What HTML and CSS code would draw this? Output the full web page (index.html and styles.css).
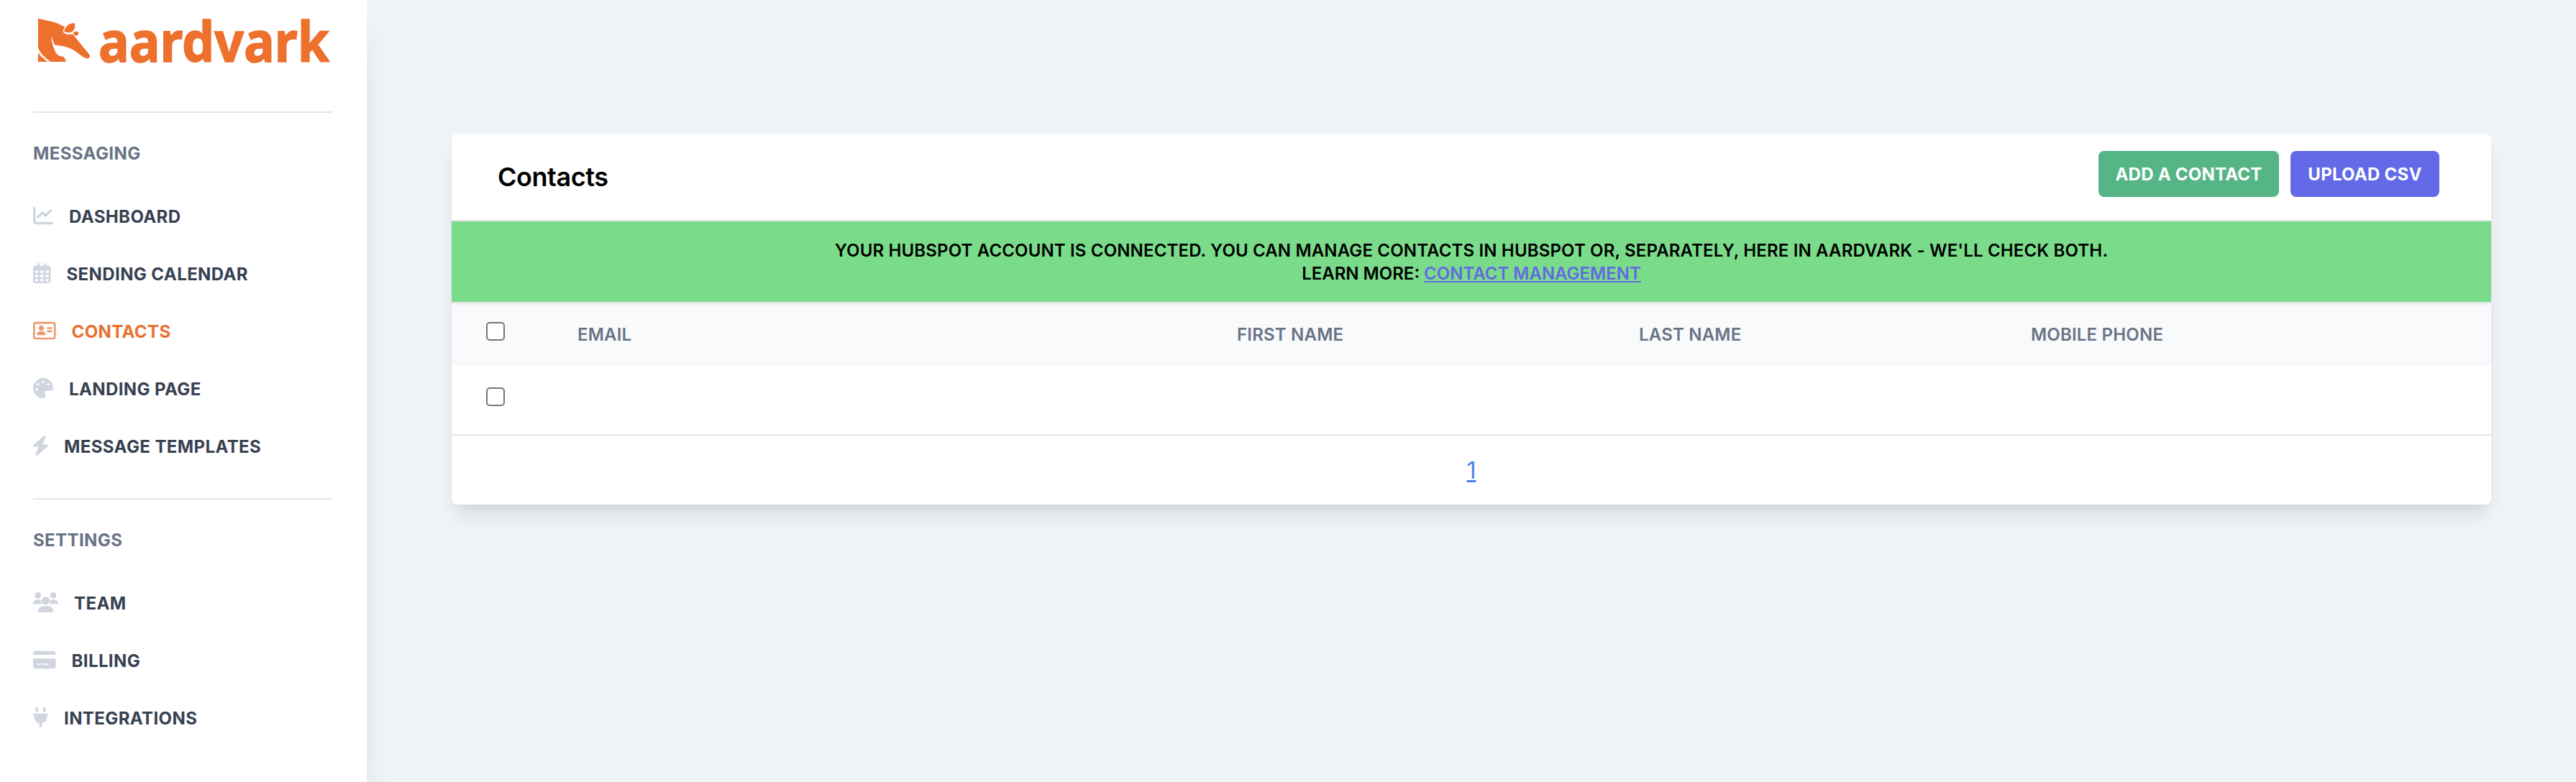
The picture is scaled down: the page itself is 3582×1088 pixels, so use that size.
FILE: index.html
```html
<!DOCTYPE html>
<html lang="en">
<head>
    <meta charset="UTF-8">
    <meta name="viewport" content="width=device-width, initial-scale=1.0">
    <title>Aardvark - Contacts</title>
    <link rel="stylesheet" href="styles.css">
</head>
<body>
    <!-- Sidebar -->
    <nav class="sidebar">
        <a class="logo" href="#">
            <svg width="416" height="155" viewBox="46 0 416 155" fill="#ed702d">
                <path d="M53 25.7L73 30.2C80 32 86 35 90.2 37.6C88.5 40 87.6 42.5 88 45C90 46.8 93 47.5 97 47.6L101.5 48L124 75.5C126.3 79 123.5 82 120.5 81.3C114 80 108 72 98 67.5C90 63.8 82 63.6 76.8 62.8C74 60 73.5 56 72.3 52.3L71.3 52.6C72 59 74 66 76.5 71C79 77 83 78 88.3 79C90 81 91.3 83.5 92 86H70.2C63 80.5 56 74.5 53 66.5Z"/>
                <path d="M53 73.2C56.5 78.5 61.5 82.5 66.3 86H53Z"/>
                <g stroke="#fff" stroke-width="1">
                    <path d="M88.4 44C90 36 97 31.500 103 31.700C106.500 35 104.500 41 100.500 44.500C97 46.500 92 46 88.400 44Z"/>
                    <path d="M101.500 46.500C102.500 43 107.500 42 109.700 45.500C109.500 50 105 51.500 102 48.300Z"/>
                </g>
                <path d="M88.500 44.500L94 47.500L102 46" fill="none" stroke="#fff" stroke-width="1.200"/>
                <text class="logo-text" x="137" y="86" textLength="321" lengthAdjust="spacingAndGlyphs">aardvark</text>
            </svg>
        </a>
        <hr>
        <h6>Messaging</h6>
        <ul>
            <li><a href="#">
                <svg width="28" height="28" viewBox="0 0 512 512"><path d="M64 64c0-17.700-14.300-32-32-32S0 46.300 0 64V400c0 44.200 35.800 80 80 80H480c17.700 0 32-14.300 32-32s-14.300-32-32-32H80c-8.800 0-16-7.200-16-16V64zm406.600 86.600c12.500-12.500 12.500-32.800 0-45.300s-32.800-12.500-45.300 0L320 210.700l-57.400-57.400c-12.500-12.500-32.800-12.500-45.300 0l-112 112c-12.500 12.500-12.500 32.800 0 45.300s32.800 12.500 45.300 0L240 221.300l57.400 57.400c12.500 12.500 32.800 12.500 45.300 0l128-128z"/></svg>
                <span>Dashboard</span></a></li>
            <li><a href="#">
                <svg width="24.5" height="28" viewBox="0 0 448 512"><path fill-rule="evenodd" d="M112 24a24 24 0 0 1 48 0V64H288V24a24 24 0 0 1 48 0V64H384a64 64 0 0 1 64 64V448a64 64 0 0 1-64 64H64a64 64 0 0 1-64-64V128A64 64 0 0 1 64 64H112ZM48 192V248H128V192ZM176 192V248H272V192ZM320 192V248H400V192ZM48 296V360H128V296ZM176 296V360H272V296ZM320 296V360H400V296ZM48 408V448a16 16 0 0 0 16 16H128V408ZM176 408V464H272V408ZM320 408V464H384a16 16 0 0 0 16-16V408Z"/></svg>
                <span>Sending Calendar</span></a></li>
            <li><a href="#" class="active">
                <svg width="31.5" height="28" viewBox="0 0 576 512"><path fill-rule="evenodd" d="M64 32H512a64 64 0 0 1 64 64V416a64 64 0 0 1-64 64H64a64 64 0 0 1-64-64V96A64 64 0 0 1 64 32ZM64 80a16 16 0 0 0-16 16V416a16 16 0 0 0 16 16H512a16 16 0 0 0 16-16V96a16 16 0 0 0-16-16Z"/><circle cx="208" cy="192" r="64"/><path d="M176 272H240a80 80 0 0 1 80 80a16 16 0 0 1-16 16H112a16 16 0 0 1-16-16A80 80 0 0 1 176 272Z"/><rect x="352" y="168" width="136" height="48" rx="24"/><rect x="352" y="248" width="136" height="48" rx="24"/></svg>
                <span>Contacts</span></a></li>
            <li><a href="#">
                <svg width="28" height="28" viewBox="0 0 512 512"><path d="M512 256c0 .9 0 1.800 0 2.700c-.4 36.500-33.600 61.300-70.100 61.300H344c-26.500 0-48 21.500-48 48c0 3.400 .4 6.700 1 9.900c2.100 10.200 6.500 20 10.800 29.900c6.100 13.800 12.100 27.500 12.100 42c0 31.800-21.600 60.700-53.400 62c-3.500 .1-7 .2-10.600 .2C114.600 512 0 397.400 0 256S114.600 0 256 0S512 114.600 512 256zM128 288a32 32 0 1 0 -64 0 32 32 0 1 0 64 0zm0-96a32 32 0 1 0 0-64 32 32 0 1 0 0 64zM288 96a32 32 0 1 0 -64 0 32 32 0 1 0 64 0zm96 96a32 32 0 1 0 0-64 32 32 0 1 0 0 64z"/></svg>
                <span>Landing Page</span></a></li>
            <li><a href="#">
                <svg width="21" height="28" viewBox="0 0 384 512"><path d="M317 44C330 14 296-14 269 7L13 231C-10 250 2 288 32 288H144L67 468C54 498 88 526 115 505L371 281C394 262 382 224 352 224H240Z"/></svg>
                <span>Message Templates</span></a></li>
        </ul>
        <hr>
        <h6>Settings</h6>
        <ul>
            <li><a href="#">
                <svg width="35" height="28" viewBox="0 0 640 512"><circle cx="124" cy="80" r="80"/><circle cx="512" cy="80" r="80"/><circle cx="320" cy="216" r="104"/><path d="M107 192H149C168 192 185 196 201 203C196 240 207 274 235 298Q234 299 229 299H21Q0 299 0 278C0 231 48 192 107 192Z"/><path d="M533 192H491C472 192 455 196 439 203C444 240 433 274 405 298Q406 299 411 299H619Q640 299 640 278C640 231 592 192 533 192Z"/><path d="M261 352H379C453 352 512 412 512 485Q512 512 485 512H155Q128 512 128 485C128 412 187 352 261 352Z"/></svg>
                <span>Team</span></a></li>
            <li><a href="#">
                <svg width="31.5" height="28" viewBox="0 0 576 512"><path fill-rule="evenodd" d="M64 32H512a64 64 0 0 1 64 64V128H0V96A64 64 0 0 1 64 32ZM0 224H576V416a64 64 0 0 1-64 64H64a64 64 0 0 1-64-64ZM112 352a16 16 0 0 0 0 32H176a16 16 0 0 0 0-32ZM240 352a16 16 0 0 0 0 32H368a16 16 0 0 0 0-32Z"/></svg>
                <span>Billing</span></a></li>
            <li><a href="#">
                <svg width="21" height="28" viewBox="0 0 384 512"><path d="M64 0H128V128H64ZM256 0H320V128H256ZM32 160H352a32 32 0 0 1 0 64V256A160 160 0 0 1 224 413V512H160V413A160 160 0 0 1 32 256V224a32 32 0 0 1 0-64Z"/></svg>
                <span>Integrations</span></a></li>
        </ul>
    </nav>

    <!-- Contacts table -->
    <main>
        <div class="card">
            <div class="card-header">
                <h3>Contacts</h3>
                <div class="actions">
                    <button class="btn-add">Add a contact</button>
                    <button class="btn-upload">Upload CSV</button>
                </div>
            </div>
            <div class="banner">
                <p class="banner-text">Your HubSpot account is connected. You can manage contacts in HubSpot or, separately, here in Aardvark - we'll check both.</p>
                <p>Learn more: <a href="#">Contact Management</a></p>
            </div>
            <table>
                <thead>
                    <tr>
                        <th class="col-check"><input type="checkbox"></th>
                        <th class="col-email">Email</th>
                        <th class="col-first">First name</th>
                        <th class="col-last">Last name</th>
                        <th class="col-phone">Mobile phone</th>
                    </tr>
                </thead>
                <tbody>
                    <tr>
                        <td><input type="checkbox"></td>
                        <td></td>
                        <td></td>
                        <td></td>
                        <td></td>
                    </tr>
                </tbody>
            </table>
            <div class="pagination"><a href="#">1</a></div>
        </div>
    </main>
</body>
</html>
```

FILE: styles.css
```css
/* Global styles */
* {
    box-sizing: border-box;
}

body {
    font-family: Inter, "Liberation Sans", sans-serif;
    background-color: #f0f4f8;
    margin: 0;
    display: flex;
    height: 100vh;
    font-size: 24px;
    line-height: 32px;
    color: #000;
}

/* Sidebar styles */
.sidebar {
    width: 510px;
    flex-shrink: 0;
    height: 100vh;
    padding: 0 48px 0 46px;
    background-color: white;
    box-shadow: 0 40px 50px -10px rgba(0, 0, 0, 0.1), 0 20px 20px -10px rgba(0, 0, 0, 0.04);
    clip-path: inset(0 -60px 0 0);
}

.logo, .logo svg {
    display: block;
    overflow: visible;
}

.logo-text {
    font-family: "Noto Sans", sans-serif;
    font-weight: bold;
    font-size: 77px;
    stroke: #ed702d;
    stroke-width: 1.5px;
}

hr {
    border: none;
    height: 2px;
    margin: 0;
    background-color: #e2e5e8;
}

h6 {
    margin: 41px 0 31px;
    font-size: 24px;
    font-weight: 700;
    letter-spacing: 0.4px;
    text-transform: uppercase;
    color: #697386;
}

ul {
    list-style: none;
    margin: 0 0 32px;
    padding: 0;
}

li a {
    display: flex;
    align-items: center;
    height: 80px;
    font-weight: 700;
    letter-spacing: 0.4px;
    text-transform: uppercase;
    text-decoration: none;
    color: #374151;
}

li span {
    padding-top: 2px;
}

li svg {
    margin: 0 22px 2px 0;
    fill: #d0d5e0;
}

li a.active {
    color: #e8712f;
}

li a.active svg {
    fill: #eb9a70;
}

/* Card styles */
main {
    flex: 1;
    padding: 186px 118px 0;
}

.card {
    background-color: white;
    border-radius: 8px;
    box-shadow: 0 20px 30px -6px rgba(0, 0, 0, 0.1), 0 8px 12px -4px rgba(0, 0, 0, 0.05);
}

.card-header {
    display: flex;
    justify-content: space-between;
    height: 122px;
    padding: 24px 72px 0 64px;
    border-bottom: 2px solid #e5e7ea;
}

h3 {
    margin: 4px 0 0;
    font-size: 36px;
    font-weight: 600;
    letter-spacing: -0.45px;
    line-height: 64px;
}

.actions {
    display: flex;
    gap: 16px;
}

button {
    height: 64px;
    padding: 0;
    border: none;
    border-radius: 8px;
    font-family: inherit;
    font-size: 24px;
    font-weight: 700;
    letter-spacing: 0.25px;
    text-transform: uppercase;
    color: white;
    cursor: pointer;
}

.btn-add {
    width: 251px;
    background-color: #56b586;
}

.btn-upload {
    width: 207px;
    background-color: #636ae8;
}

.banner {
    height: 114px;
    padding: 25px 0 23px;
    background-color: #7adc8a;
    border-bottom: 2px solid #e0e8e6;
    text-align: center;
    font-weight: 600;
    text-transform: uppercase;
}

.banner p {
    margin: 0;
}

.banner .banner-text {
    letter-spacing: 0.15px;
}

.banner a {
    color: #636ae0;
}

/* Table styles */
table {
    width: 100%;
    table-layout: fixed;
    border-collapse: separate;
    border-spacing: 0;
}

th {
    height: 85px;
    padding: 2px 0 0 49px;
    background-color: #f9fafc;
    border-top: 2px solid #eef1f3;
    border-bottom: 2px solid #f3f5f7;
    text-align: left;
    font-weight: 600;
    letter-spacing: 0.2px;
    text-transform: uppercase;
    color: #697386;
}

td {
    height: 99px;
    padding: 0 0 0 48px;
    border-bottom: 2px solid #e5e7e9;
}

.col-check {
    width: 126px;
    padding: 0 0 0 48px;
}

.col-email {
    width: 917px;
}

.col-first {
    width: 559px;
}

.col-last {
    width: 545px;
}

input[type="checkbox"] {
    appearance: none;
    display: block;
    width: 26px;
    height: 26px;
    margin: 0 0 7px;
    border: 2px solid #767676;
    border-radius: 5px;
    background-color: white;
}

.pagination {
    display: flex;
    justify-content: center;
    align-items: center;
    height: 96px;
    padding-top: 2px;
    font-size: 32px;
}

.pagination a {
    color: #4a80e8;
}
```
